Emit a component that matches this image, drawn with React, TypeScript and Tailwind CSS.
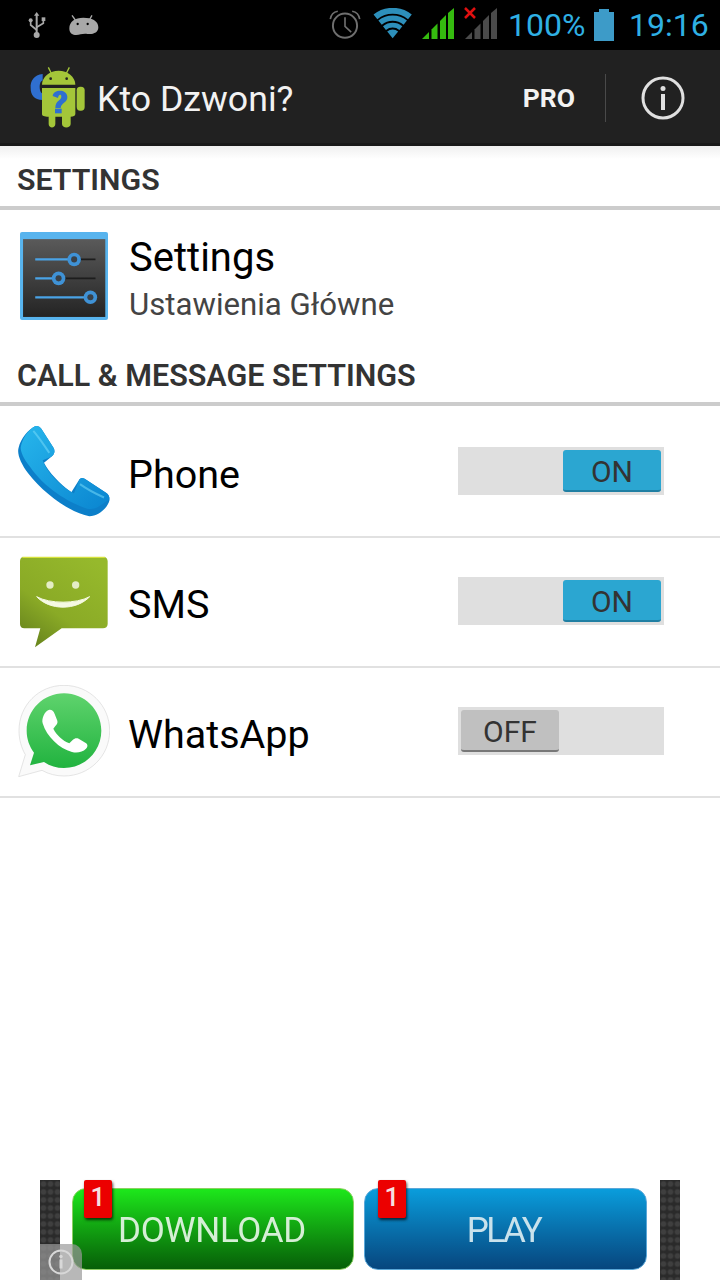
import React from "react";

const UsbIcon = () => (
  <svg className="absolute left-[27px] top-[12px] w-[20px] h-[28px]" viewBox="84 36 54 84" fill="none" stroke="#a8a8a8">
    <path d="M110 44V105" strokeWidth="6" />
    <path d="M110 36l-8 11h16z" fill="#a8a8a8" stroke="none" />
    <circle cx="110" cy="105" r="9" fill="#a8a8a8" stroke="none" />
    <path d="M110 90L92 75V62" strokeWidth="5" />
    <path d="M110 82L130 70V60" strokeWidth="5" />
    <circle cx="92" cy="61" r="6" fill="#a8a8a8" stroke="none" />
    <rect x="125" y="52" width="11" height="11" fill="#a8a8a8" stroke="none" />
  </svg>
);

const DebugIcon = () => (
  <svg className="absolute left-[69px] top-[13px] w-[30px] h-[24px]" viewBox="207 40 90 70">
    <path d="M216 46l10 14M276 46l-8 14" stroke="#a8a8a8" strokeWidth="4" />
    <path d="M208 85C208 65 225 53 250 53C275 53 295 62 295 82C295 98 280 104 262 102C245 100 240 106 225 105C214 104 208 97 208 85Z" fill="#a8a8a8" />
    <circle cx="233" cy="72" r="3.5" fill="#000" />
    <circle cx="263" cy="72" r="3.5" fill="#000" />
  </svg>
);

const AlarmIcon = () => (
  <svg className="w-[32px] h-[32px] absolute left-[329px] top-[9px]" viewBox="26 28 98 96" fill="none" stroke="#6f6f6f">
    <circle cx="75" cy="78" r="37" strokeWidth="6" />
    <path d="M75 52V80L94 98" strokeWidth="5" />
    <path d="M30 58C32 45 42 36 53 34" strokeWidth="5" />
    <path d="M120 58C118 45 108 36 97 34" strokeWidth="5" />
  </svg>
);

const WifiIcon = () => (
  <svg className="w-[40px] h-[31px] absolute left-[373px] top-[8px]" viewBox="158 24 120 92" fill="none" stroke="#2d8fba">
    <path d="M217 114L200.600 93.800A26 26 0 0 1 233.400 93.800Z" fill="#2d8fba" stroke="none" />
    <path d="M192.400 83.700A39 39 0 0 1 241.600 83.700" strokeWidth="14" />
    <path d="M179.200 67.400A60 60 0 0 1 254.800 67.400" strokeWidth="16" />
    <path d="M165.300 50.300A82 82 0 0 1 268.700 50.300" strokeWidth="18" />
  </svg>
);

const Signal = ({ color, left }: { color: string; left: string }) => (
  <svg className={left} viewBox="0 0 32 31" fill={color}>
    <path d="M0 31L7 24V31Z" />
    <path d="M9.500 31V21.500L15.500 15.500V31Z" />
    <path d="M18 31V13L24 7V31Z" />
    <path d="M26 31V5L32 0V31Z" />
  </svg>
);

const Battery = () => (
  <svg className="absolute left-[594px] top-[9px] w-[20px] h-[32px]" viewBox="0 0 20 32" fill="#3d9bc8">
    <rect x="5" y="0" width="10" height="4" />
    <rect x="0" y="3" width="20" height="29" />
  </svg>
);

const AppLogo = () => (
  <svg className="w-[56px] h-[62px] -mt-[3px]" viewBox="90 196 168 186">
    <path d="M128 220C102 222 90 242 92 262C92 282 102 298 128 298L128 278C122 278 119 268 119 258C119 248 122 240 128 240Z" fill="#2f6fd0" />
    <path d="M145 200l10 20M208 200l-10 20" stroke="#a4c639" strokeWidth="4" />
    <path d="M126 252C126 228 150 210 176 210C202 210 226 228 226 252Z" fill="#a4c639" />
    <circle cx="152" cy="234" r="4" fill="#222" />
    <circle cx="200" cy="234" r="4" fill="#222" />
    <path d="M126 262H226V340C226 346 220 348 212 348V370C212 384 186 384 186 370V348H166V370C166 384 146 384 146 370V348C132 348 126 346 126 340Z" fill="#a4c639" />
    <rect x="230" y="258" width="24" height="72" rx="11" fill="#a4c639" />
    <path d="M158 286C160 266 200 264 202 288C203 306 184 304 182 322H166C166 298 184 300 184 288C184 280 176 280 174 292Z" fill="#2f6fd0" />
    <rect x="165" y="324" width="20" height="14" fill="#2f6fd0" />
  </svg>
);

const InfoIcon = () => (
  <svg className="w-[44px] h-[44px]" viewBox="0 0 44 44" fill="none">
    <circle cx="22" cy="22" r="20" stroke="#e0e0e0" strokeWidth="3" />
    <circle cx="22" cy="12.500" r="2.500" fill="#e0e0e0" />
    <rect x="20" y="18" width="4" height="16" fill="#e0e0e0" />
  </svg>
);

const SettingsIcon = () => (
  <svg className="w-[88px] h-[88px]" viewBox="62 247 260 260">
    <defs>
      <linearGradient id="sg" x1="0" y1="0" x2="0" y2="1">
        <stop offset="0" stopColor="#5a5a5a" />
        <stop offset="1" stopColor="#242424" />
      </linearGradient>
    </defs>
    <rect x="62" y="247" width="260" height="260" rx="6" fill="#58b4ee" />
    <rect x="71" y="268" width="243" height="230" fill="url(#sg)" />
    <path d="M107 328H222M107 384H176M107 440H270" stroke="#4aa3e6" strokeWidth="7" />
    <path d="M222 328H285M176 384H285" stroke="#1d1d1d" strokeWidth="5" />
    {[[222, 328], [176, 384], [270, 440]].map(([x, y]) => (
      <g key={x}>
        <circle cx={x} cy={y} r="20" fill="#3f92d6" />
        <circle cx={x} cy={y} r="9" fill="#3a4148" />
      </g>
    ))}
  </svg>
);

const PhoneIcon = () => (
  <svg className="w-[92px] h-[91px] -mt-[2px]" viewBox="54 48 276 272">
    <defs>
      <linearGradient id="pg" x1="0" y1="0" x2="1" y2="1">
        <stop offset="0" stopColor="#27b6ec" />
        <stop offset="1" stopColor="#0a85d0" />
      </linearGradient>
    </defs>
    <path d="M105 48C112 46 120 50 124 56L160 112C166 122 164 132 154 140L132 158C145 185 180 222 214 246L238 208C242 202 248 202 254 206L318 248C328 255 332 266 326 278C318 296 295 318 268 318C215 310 130 250 85 190C62 160 50 130 56 112C62 85 85 58 105 48Z" fill="#0c7fc9" />
    <path d="M105 48C112 46 120 50 124 56L160 112C166 122 164 132 154 140L128 150C140 185 178 226 222 250L238 208C242 202 248 202 254 206L318 248C328 255 332 266 322 272C300 285 290 300 262 296C205 278 130 230 90 170C70 145 62 125 62 112C66 85 85 58 105 48Z" fill="url(#pg)" />
    <path d="M100 62C120 85 135 110 148 128M240 222C265 240 285 250 312 262" stroke="#74d8f7" strokeWidth="6" opacity="0.55" fill="none" />
  </svg>
);

const SmsIcon = () => (
  <svg className="w-[90px] h-[92px]" viewBox="58 438 270 276">
    <defs>
      <linearGradient id="mg" x1="0.8" y1="0" x2="0.1" y2="1">
        <stop offset="0" stopColor="#96b92c" />
        <stop offset="0.6" stopColor="#8aaa26" />
        <stop offset="1" stopColor="#64801c" />
      </linearGradient>
    </defs>
    <path d="M72 441H312C320 441 324 447 324 454V642C324 650 318 655 310 655H186L106 712L122 655H74C66 655 61 650 61 642V454C61 447 64 441 72 441Z" fill="url(#mg)" />
    <path d="M68 442H316" stroke="#d6e23c" strokeWidth="4" />
    <circle cx="151" cy="525" r="11" fill="#e4edc6" />
    <circle cx="228" cy="525" r="11" fill="#e4edc6" />
    <path d="M111 560C150 602 230 602 270 560C230 582 150 582 111 560Z" fill="#f5f9e2" stroke="#f5f9e2" strokeWidth="3" />
  </svg>
);

const WhatsAppIcon = () => (
  <svg className="w-[92px] h-[92px] -mt-[2px]" viewBox="54 825 276 276">
    <defs>
      <linearGradient id="wg" x1="0" y1="0" x2="0" y2="1">
        <stop offset="0" stopColor="#5fd36d" />
        <stop offset="1" stopColor="#21b33f" />
      </linearGradient>
    </defs>
    <path d="M192 826C268 826 329 886 329 962C329 1038 268 1098 192 1098C168 1098 145 1092 126 1081L56 1100L76 1034C64 1013 57 988 57 962C57 886 116 826 192 826Z" fill="#fafafa" stroke="#d8d8d8" strokeWidth="2" />
    <path d="M192 850C254 850 304 900 304 962C304 1024 254 1074 192 1074C170 1074 150 1068 132 1056L90 1066L102 1028C88 1009 80 986 80 962C80 900 130 850 192 850Z" fill="url(#wg)" />
    <path d="M146 900C154 898 160 902 164 912L172 932C174 938 170 944 166 948L160 956C170 976 188 992 208 1000L218 990C224 984 230 984 236 986L256 998C264 1002 264 1010 258 1016C248 1026 232 1030 216 1026C178 1016 140 980 128 940C124 926 134 904 146 900Z" fill="#fff" />
  </svg>
);

const Toggle = ({ on }: { on: boolean }) => (
  <div className={`absolute left-[458px] -mt-[2px] w-[206px] h-[48px] bg-[#dfdfdf] flex items-center px-[3px] ${on ? "justify-end" : "justify-start"}`}>
    <div className={`w-[98px] h-[42px] pt-[2px] rounded-[3px] flex items-center justify-center text-[30px] text-[#333333] border-b-[2px] ${on ? "bg-[#2ba6d1] border-[#1f7fa3]" : "bg-[#c0c0c0] border-[#777777]"}`}>
      {on ? "ON" : "OFF"}
    </div>
  </div>
);

const Row = ({ icon, label, on }: { icon: React.ReactNode; label: string; on: boolean }) => (
  <div className="relative h-[130px] border-b-[2px] border-[#e1e1e1] flex items-center pl-[18px]">
    <div className="w-[92px] flex justify-center">{icon}</div>
    <div className="ml-[18px] pt-[6px] text-[39.500px] text-black">{label}</div>
    <Toggle on={on} />
  </div>
);

const Badge = ({ left }: { left: string }) => (
  <div className={`absolute ${left} -top-[8px] w-[28px] h-[38px] bg-[#ec0000] rounded-[2px] flex items-start justify-center text-[26px] leading-[34px] font-medium text-[#f6e0e0] shadow-[1px_2px_3px_rgba(0,0,0,0.7)]`}>
    1
  </div>
);

const Strip = () => (
  <div className="w-[20px] h-full bg-[#333333] bg-[radial-gradient(circle,#3f3f3f_35%,#2a2a2a_70%)] bg-[length:7px_8px]" />
);

export default function App() {
  return (
    <div className="relative w-[720px] h-[1280px] bg-white overflow-hidden flex flex-col font-['Roboto',sans-serif]">
      <div className="relative h-[50px] bg-black shrink-0">
        <UsbIcon />
        <DebugIcon />
        <AlarmIcon />
        <WifiIcon />
        <Signal color="#35bb0f" left="absolute left-[422px] top-[8px] w-[32px] h-[31px]" />
        <Signal color="#4a4a4a" left="absolute left-[465px] top-[8px] w-[32px] h-[31px]" />
        <svg className="absolute left-[464px] top-[7px] w-[12px] h-[12px]" viewBox="0 0 12 12" stroke="#e01010" strokeWidth="2.500"><path d="M1 1L11 11M11 1L1 11" /></svg>
        <div className="absolute left-[508px] top-0 h-[50px] flex items-center text-[32px] text-[#2fb0e4]">100%</div>
        <Battery />
        <div className="absolute left-[629px] top-0 h-[50px] flex items-center text-[32px] text-[#2fb0e4]">19:16</div>
      </div>

      <div className="h-[96px] shrink-0 bg-[#212121] border-b-[3px] border-[#191919] pt-[3px] flex items-center pl-[30px]">
        <AppLogo />
        <div className="ml-[11px] pt-[3px] text-[35.700px] text-[#f2f2f2]">Kto Dzwoni?</div>
        <div className="ml-auto text-[26.500px] font-bold text-[#f2f2f2]">PRO</div>
        <div className="ml-[30px] w-[1px] h-[48px] bg-[#4a4a4a]" />
        <div className="ml-[35px] mr-[35px]"><InfoIcon /></div>
      </div>

      <div className="border-b-[4px] border-[#cccccc] bg-gradient-to-b from-[#f0f0f0] to-white to-[22%]">
        <div className="h-[60px] pl-[17px] pt-[8px] flex items-center text-[30.300px] font-semibold text-[#333333]">SETTINGS</div>
      </div>
      <div className="h-[136px] flex pl-[18px]">
        <div className="w-[92px] pt-[22px] flex justify-center items-start"><SettingsIcon /></div>
        <div className="ml-[19px] pt-[23px]">
          <div className="text-[40px] leading-[50px] text-black">Settings</div>
          <div className="text-[31.200px] leading-[44px] text-[#444444]">Ustawienia Główne</div>
        </div>
      </div>
      <div className="border-b-[4px] border-[#cccccc]">
        <div className="h-[56px] pl-[17px] pt-[4px] flex items-center text-[30.500px] font-semibold text-[#333333]">CALL &amp; MESSAGE SETTINGS</div>
      </div>

      <div className="pt-[2px]">
        <Row icon={<PhoneIcon />} label="Phone" on />
        <Row icon={<SmsIcon />} label="SMS" on />
        <Row icon={<WhatsAppIcon />} label="WhatsApp" on={false} />
      </div>

      <div className="mt-auto h-[100px] shrink-0 relative flex pl-[40px] pr-[40px]">
        <Strip />
        <div className="flex-1 pt-[8px] pb-[10px] pl-[12px] pr-[13px] flex gap-[10px]">
          <div className="relative w-[282px] rounded-[14px] border border-[#8ccf62] bg-gradient-to-b from-[#1de81b] to-[#075f08] flex items-center justify-center text-[35px] tracking-[-0.3px] text-[#d5efd5] blur-[0.6px]">
            <span className="pt-[4px] pr-[2px]">DOWNLOAD</span>
          </div>
          <div className="relative flex-1 rounded-[14px] border border-[#5aa7d8] bg-gradient-to-b from-[#0a9ddc] to-[#07467e] flex items-center justify-center text-[35px] tracking-[-2.500px] text-[#c9e2ec] blur-[0.6px]">
            <span className="pt-[4px] pr-[4px]">PLAY</span>
          </div>
        </div>
        <Strip />
        <div className="absolute left-[72px] top-[8px] w-[282px]"><Badge left="left-[12px]" /></div>
        <div className="absolute left-[364px] top-[8px] w-[283px]"><Badge left="left-[14px]" /></div>
        <div className="absolute left-[40px] bottom-0 w-[42px] h-[36px] bg-[#9a9a9a]/70 rounded-tr-[10px] flex items-center justify-center">
          <svg className="w-[26px] h-[26px]" viewBox="0 0 26 26" fill="none">
            <circle cx="13" cy="13" r="11.500" stroke="#d8d8d8" strokeWidth="2" />
            <circle cx="13" cy="7.500" r="1.700" fill="#d8d8d8" />
            <rect x="11.500" y="10.500" width="3" height="9" fill="#d8d8d8" />
          </svg>
        </div>
      </div>
    </div>
  );
}
